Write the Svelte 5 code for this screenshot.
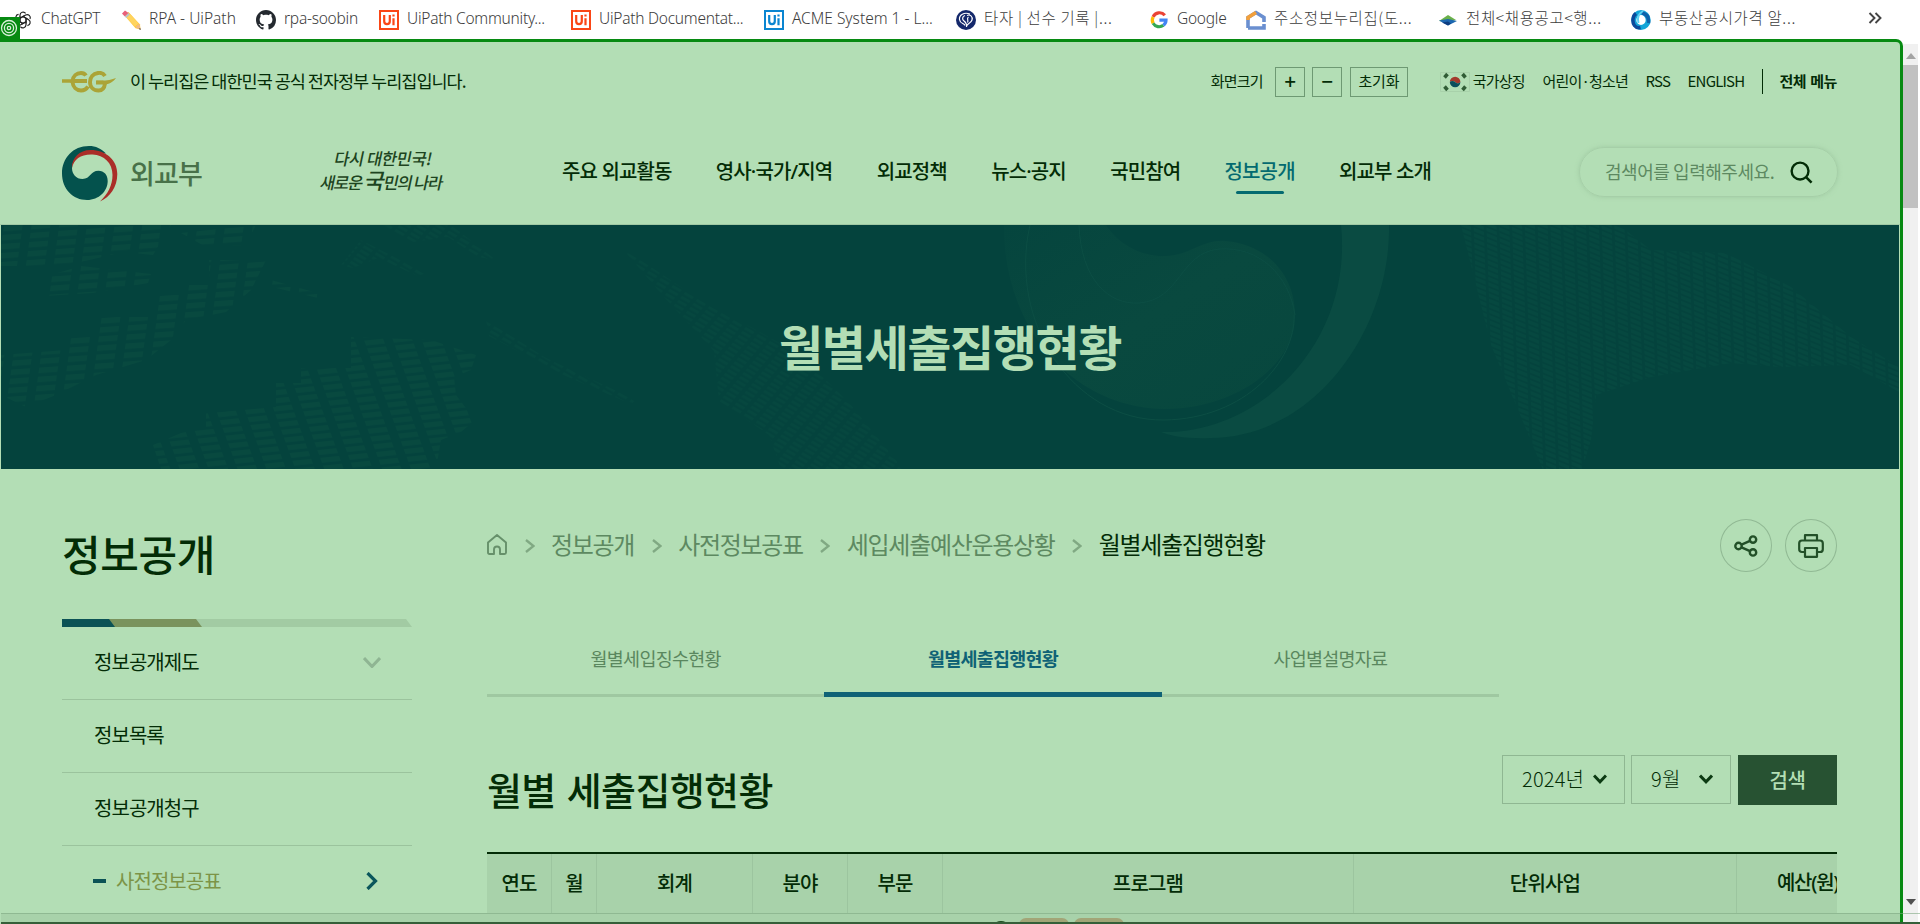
<script>
  const bookmarks = [
    { icon: 'gpt', label: 'ChatGPT', w: 108 },
    { icon: 'pencil', label: 'RPA - UiPath', w: 135, wide: true },
    { icon: 'github', label: 'rpa-soobin', w: 123 },
    { icon: 'ui', label: 'UiPath Community...', w: 192 },
    { icon: 'ui', label: 'UiPath Documentat...', w: 193 },
    { icon: 'uiblue', label: 'ACME System 1 - L...', w: 192, wide: true },
    { icon: 'ball', label: '타자 | 선수 기록 |...', w: 193, ko: true },
    { icon: 'google', label: 'Google', w: 97 },
    { icon: 'house', label: '주소정보누리집(도...', w: 192, ko: true },
    { icon: 'hill', label: '전체<채용공고<행...', w: 193, ko: true },
    { icon: 'swirl', label: '부동산공시가격 알...', w: 192, ko: true }
  ];
  const nav = ['주요 외교활동', '영사·국가/지역', '외교정책', '뉴스·공지', '국민참여', '정보공개', '외교부 소개'];
  const side = ['정보공개제도', '정보목록', '정보공개청구'];
  const crumbs = ['정보공개', '사전정보공표', '세입세출예산운용상황', '월별세출집행현황'];
  const tabs = ['월별세입징수현황', '월별세출집행현황', '사업별설명자료'];
  const columns = ['연도', '월', '회계', '분야', '부문', '프로그램', '단위사업', '예산(원)'];
</script>

<div class="screen">
  <div class="bookmarks">
    {#each bookmarks as b}
      <div class="bm" style="width:{b.w}px">
        <svg class="bicon" viewBox="0 0 20 20">
          {#if b.icon === 'gpt'}
            <g fill="none" stroke="#222" stroke-width="1.2">
              {#each [0, 60, 120, 180, 240, 300] as a}
                <path transform="rotate({a} 10 10)" d="M7 8.2V5.2a3.1 3.1 0 0 1 5.6-1.8M7 8.2l3-1.7 4.5 2.6" />
              {/each}
            </g>
          {:else if b.icon === 'pencil'}
            <path d="M3.5 5.5 7.5 2 19 14.5l.5 5-5-1.300z" fill="#ffc83d" />
            <path d="M5.500 7.500 9 4.200 17.500 13.500 14 16.500z" fill="#ffd45e" />
            <path d="M1 3.500 4 .5 7.500 3 3.800 6.500z" fill="#e8607a" />
            <path d="m3.800 6.500 3.700-3.500 1.300 1.400L5.200 8z" fill="#b9c3cb" />
            <path d="m14.300 17 3.900-3.300 1.500 6z" fill="#f0b98a" />
            <path d="m17.800 18.900 1.400-1 .6 2z" fill="#444" />
          {:else if b.icon === 'github'}
            <path transform="scale(1.25)" fill="#24292f" d="M8 0C3.580 0 0 3.580 0 8c0 3.540 2.290 6.530 5.470 7.590.4.070.55-.17.55-.38 0-.19-.01-.82-.01-1.490-2.010.37-2.530-.49-2.690-.94-.09-.23-.48-.94-.82-1.130-.28-.15-.68-.52-.01-.53.63-.01 1.080.58 1.230.82.72 1.210 1.870.87 2.330.66.070-.52.28-.87.51-1.070-1.780-.2-3.640-.89-3.640-3.950 0-.87.31-1.590.82-2.150-.08-.2-.36-1.020.08-2.120 0 0 .67-.21 2.200.82.64-.18 1.320-.27 2-.27s1.360.09 2 .27c1.530-1.040 2.200-.82 2.200-.82.44 1.100.16 1.920.08 2.120.51.56.82 1.270.82 2.150 0 3.070-1.870 3.750-3.650 3.950.29.25.54.73.54 1.480 0 1.070-.01 1.930-.01 2.200 0 .21.15.46.55.38A8.010 8.010 0 0 0 16 8c0-4.420-3.580-8-8-8z" />
          {:else if b.icon === 'ui' || b.icon === 'uiblue'}
            <g fill="none" stroke={b.icon === 'ui' ? '#fa4616' : '#0a85d1'}>
              <path stroke-width="2" d="M1 1h18v18H1z" />
              <path stroke-width="2.200" d="M5.200 5v6.300a2.800 2.800 0 0 0 5.600 0V5M14.500 8.200V15.200M14.500 4.400v2.200" />
            </g>
          {:else if b.icon === 'ball'}
            <circle cx="10" cy="10" r="10" fill="#14286b" />
            <path d="M14 4C8 1.800 3 5 3.500 9.500s4.500 3.500 5.500 6M9 5.500c-3 1-3 4-1 5.500s3 3 2.500 6M11 5.500c3-1.500 6 1 5 4.500s-5 3-5.500 6.500M12.500 7c-2.500 1.500.5 3.500-1 5.500" fill="none" stroke="#fff" stroke-width="1.200" />
          {:else if b.icon === 'google'}
            <g fill="none" stroke-width="3.200">
              <path stroke="#ea4335" d="M15.800 5.200A7 7 0 0 0 4.100 6.900" />
              <path stroke="#fbbc05" d="M4.100 6.900a7 7 0 0 0 0 6.400" />
              <path stroke="#34a853" d="M4.100 13.300a7 7 0 0 0 10.300 2" />
              <path stroke="#4285f4" d="M14.400 15.300A6.500 6.500 0 0 0 17 10.200h-6.600" />
            </g>
          {:else if b.icon === 'house'}
            <path d="M2 18V7.500L10 2.500 18 7.500V12M18 14v4H2" fill="none" stroke="#6a8fd0" stroke-width="3.600" />
            <path d="M2 10V7.500L10 2.500" fill="none" stroke="#f3a03a" stroke-width="3.600" />
          {:else if b.icon === 'hill'}
            <path d="M1 11 10 5l8 5-8 2z" fill="#6ab04a" />
            <path d="m1 10.500 9-1.500 9 2-9 4.500z" fill="#1c67b0" />
            <path d="m4 12.500 6-1 3 2-3 2z" fill="#0e3d80" />
          {:else}
            <ellipse cx="10" cy="10" rx="7.200" ry="7.500" fill="none" stroke="#12a5d8" stroke-width="5" />
            <path d="M5 3.500C1.500 6 1 12 3.500 15.500c1.500 2 4 2.500 6 2" fill="none" stroke="#0c4a9c" stroke-width="3.500" />
            <path d="M11 3c5 1 7 5 6.500 10" fill="none" stroke="#0d62ab" stroke-width="3.500" />
            <path d="M12 1C7 4 6 8 7.500 13" fill="none" stroke="#5ed0f2" stroke-width="2" />
          {/if}
        </svg>
        <span class:ko={b.ko} class:wide={b.wide}>{b.label}</span>
      </div>
    {/each}
    <svg class="more" viewBox="0 0 14 12"><path d="m1.500 1 5 5-5 5M7.500 1l5 5-5 5" fill="none" stroke="#444" stroke-width="1.900" /></svg>
  </div>
  <div class="badge">
    <svg viewBox="0 0 20 22"><g fill="none" stroke="#d8f0d8" stroke-width="1.300"><circle cx="9" cy="11" r="7.500" /><circle cx="9" cy="11" r="4.600" /><circle cx="9" cy="11" r="1.700" /></g></svg>
  </div>

  <div class="body">
    <div class="page">
      <header>
        <div class="top">
          <svg class="eg" viewBox="0 0 54 22">
            <path d="M0 10h24" stroke="#aba437" stroke-width="3.600" />
            <path d="M25 10H10.500c.5-5 4-8 8.500-8 2.500 0 4 1 5 2.500M10.500 11c.5 5 4 8.500 8.500 8.500 3 0 5.500-1.500 7-4M43 5c-1.500-2.500-4-3.500-7-3-5 .8-8 4.500-8 9 0 5 3.500 8.500 8.500 8.500 4 0 6-3 6.500-7M34 11.500h7.500" fill="none" stroke="#aba437" stroke-width="3.900" />
            <path d="M34 9.500C42 10.500 49 9 54 7c-3 4-7 6.500-12 6.500z" fill="#aba437" />
          </svg>
          <span class="official">이 누리집은 대한민국 공식 전자정부 누리집입니다.</span>
          <div class="util">
            <span class="size">화면크기</span>
            <span class="sq plus">+</span>
            <span class="sq minus">−</span>
            <span class="sq reset">초기화</span>
            <svg class="flag" viewBox="0 0 30 20">
              <path d="M.5.5h29v19H.5z" fill="none" stroke="#a8d1aa" />
              <path d="M9.800 10a5.300 5.300 0 0 1 10.600 0c-1.500 2-3.800 1.500-5.300 0s-4-1.500-5.300 0z" fill="#a33a2c" />
              <path d="M9.800 10a5.300 5.300 0 0 0 10.600 0c-1.500 2-3.800 1.500-5.300 0s-4-1.500-5.300 0z" fill="#0b4f5c" />
              <path d="m4.500 5.500 3-3.500M4.500 14.500l3 3.500M25.500 5.500 22.500 2M25.500 14.500l-3 3.500" stroke="#305c35" stroke-width="3.500" />
            </svg>
            <span class="u1">국가상징</span>
            <span class="u2">어린이·청소년</span>
            <span class="u3">RSS</span>
            <span class="u4">ENGLISH</span>
            <i class="bar"></i>
            <b>전체 메뉴</b>
          </div>
        </div>
        <div class="main">
          <svg class="emblem" viewBox="0 0 56 56">
            <path d="M44 7.500C39 2.500 34 0 27 0 11 0 0 12 0 27.500S11 54 25 54c12 0 20.700-9 20.700-19 0-6-3.700-10.200-9.200-10.200-8 0-8 8.200-16 8.200C14 33 10 28 10 22 10 14 18 7 27 6.500z" fill="#04524d" />
            <path d="M10 22C9.500 12 17.500 4 28.500 4 44 4 55.300 14 55.300 28 55.300 41 48 51 38 55.500 46 48 50.500 39 50.500 29 50.500 17 42 9 30.500 8.500 19 8 12 13 10 22z" fill="#aa2e28" />
          </svg>
          <span class="ministry">외교부</span>
          <div class="slogan"><span>다시 대한민국!</span><span class="second">새로운 <em>국</em>민의 나라</span></div>
          <nav>
            {#each nav as n}<span class:on={n === '정보공개'}>{n}</span>{/each}
          </nav>
          <div class="search">
            <span>검색어를 입력해주세요.</span>
            <svg viewBox="0 0 24 24"><circle cx="10.500" cy="10.500" r="8.800" fill="none" stroke="#032c06" stroke-width="2.500" /><path d="m17 17 5.500 5.500" stroke="#032c06" stroke-width="2.700" /></svg>
          </div>
        </div>
      </header>

      <section class="banner">
        <svg viewBox="0 0 1898 244">
          <defs>
            <pattern id="wide" width="28" height="9" patternUnits="userSpaceOnUse" patternTransform="rotate(-4) skewX(-12)"><path d="M3 1h19v5.500H3z" fill="#08493f" /></pattern>
            <pattern id="lean" width="28" height="8" patternUnits="userSpaceOnUse" patternTransform="rotate(-6) skewX(14)"><path d="M3 1h19v5H3z" fill="#08493f" /></pattern>
            <pattern id="fine" width="14" height="5" patternUnits="userSpaceOnUse" patternTransform="rotate(30) skewX(-10)"><path d="M2 1h10v2.500H2z" fill="#06473f" /></pattern>
            <pattern id="mesh" width="14" height="5" patternUnits="userSpaceOnUse" patternTransform="rotate(22) skewX(24)"><path d="M1 1h11v3H1z" fill="#064840" /></pattern>
            <linearGradient id="lobe" x1="0" y1="0" x2="1" y2="1"><stop offset="0" stop-color="#05453e" /><stop offset=".5" stop-color="#09493f" /><stop offset="1" stop-color="#07473e" /></linearGradient>
          </defs>
          <path fill="url(#wide)" d="M0 0h170l-18 30-30-3-25 6-35 8H0zM50 50l30-9 70 8-3 9-55 10-48 3zM180 8l75-8-10 20-40 2zM0 130 65 125V112H98V92H152V70H182V60H208V35H265L250 65 225 87 185 95 170 115 145 135 95 150 55 170 25 182 0 170zM270 55l50 14-3 4-50-12z" />
          <path fill="url(#lean)" d="M152 220 180 208 205 203V188L275 182V158H300V143H350V112L430 115 475 130 470 145 453 152 455 170 474 195 460 207 440 215 435 244H160z" />
          <path fill="url(#fine)" d="m380 0 70 0 45 35-18-3-30-20-35 5zM340 40l20-25 65 33-8 3-40-18-25 10zM485 95l60 38 90 42-5 4-70-30-72-38zM620 22l90 60 40 20 50 28 50 50 52 64H780l-12-34-50-34-5-50-50-54z" />
          <path fill="url(#mesh)" d="M1460 0h158l32 25 75 3 65 34 60 50 48 30v25l-48-27-70 2-50-4-80 14-55 18-5 45-15 49h-25l-60-144z" />
          <path fill="url(#lobe)" d="M1003 0h102c10 16 32 32 60 31 25-1 37-17 60-15 42 4 70 35 69 76-1 50-62 93-132 92-90-2-160-80-159-184z" />
          <path fill="#0a4b42" d="M1340 0h48c2 103-73 212-178 213-25 1-40-2-50-6 100 2 192-90 180-207z" />
          <path fill="none" stroke="#0c4e44" d="M1029 0c-22 96 42 196 134 195 82-1 132-60 130-105M1078 0c2 55 30 80 60 78 42-3 40-50 80-54 40-3 70 26 76 66" />
        </svg>
        <h1>월별세출집행현황</h1>
      </section>

      <div class="content">
        <aside>
          <h2>정보공개</h2>
          <svg class="strip" viewBox="0 0 350 8"><path d="M0 0h344l6 8H0z" fill="#a2cba3" /><path d="M0 0h134l6 8H0z" fill="#7a935d" /><path d="M0 0h47l6 8H0z" fill="#0b5255" /></svg>
          {#each side as s, i}
            <div class="item">
              <span>{s}</span>
              {#if i === 0}<svg width="18" height="11" viewBox="0 0 18 11"><path d="m1 1 8 8.500L17 1" fill="none" stroke="#8fb593" stroke-width="3" /></svg>{/if}
            </div>
          {/each}
          <div class="item active">
            <i></i><span>사전정보공표</span>
            <svg width="12" height="18" viewBox="0 0 12 18"><path d="m1.500 1 8 8-8 8" fill="none" stroke="#0b565c" stroke-width="3.200" /></svg>
          </div>
        </aside>

        <main>
          <div class="path">
            <svg class="home" viewBox="0 0 20 21"><path d="M1 8.500 10 1l9 7.500V18.500q0 1.500-1.500 1.500H13v-4.500a3 3 0 0 0-6 0V20H2.500Q1 20 1 18.500z" fill="none" stroke="#66906a" stroke-width="1.900" stroke-linejoin="round" /></svg>
            {#each crumbs as c, i}
              <svg class="sep" viewBox="0 0 10 14"><path d="m1 1 7.500 6L1 13" fill="none" stroke="#80a983" stroke-width="2.400" /></svg>
              <span class:current={i === 3}>{c}</span>
            {/each}
            <div class="tools">
              <div class="round"><svg width="24" height="22" viewBox="0 0 24 22"><g fill="none" stroke="#235028" stroke-width="2.400"><circle cx="4.500" cy="11" r="3.200" /><circle cx="19" cy="4.600" r="3.200" /><circle cx="19" cy="17.400" r="3.200" /><path d="m7.500 9.700 8.500-3.800M7.500 12.300l8.500 3.800" /></g></svg></div>
              <div class="round"><svg width="26" height="24" viewBox="0 0 26 24"><g fill="none" stroke="#235028" stroke-width="2.200" stroke-linejoin="round"><path d="M7 6.500V1.200h12v5.300M6.500 18H4q-2.800 0-2.800-2.800V9.300Q1.200 6.500 4 6.500h18q2.800 0 2.800 2.800v5.900q0 2.800-2.800 2.800h-2.500" /><path d="M7 14h12v8.800H7z" /></g></svg></div>
            </div>
          </div>

          <div class="tabs">
            {#each tabs as t, i}<div class:sel={i === 1}>{t}</div>{/each}
          </div>

          <div class="headline">
            <h3>월별 세출집행현황</h3>
            <div class="form">
              <div class="select year"><span>2024년</span><svg viewBox="0 0 14 10"><path d="m1 1.500 6 6.300 6-6.300" fill="none" stroke="#0c3a12" stroke-width="3" /></svg></div>
              <div class="select month"><span>9월</span><svg viewBox="0 0 14 10"><path d="m1 1.500 6 6.300 6-6.300" fill="none" stroke="#0c3a12" stroke-width="3" /></svg></div>
              <div class="submit">검색</div>
            </div>
          </div>

          <div class="table">
            {#each columns as c}<div>{c}</div>{/each}
          </div>
        </main>
      </div>
    </div>

    <div class="scroll">
      <svg width="10" height="6" viewBox="0 0 10 6"><path d="M0 6 5 0l5 6z" fill="#a3a3a3" /></svg>
      <div class="thumb"></div>
      <svg class="down" width="10" height="6" viewBox="0 0 10 6"><path d="m0 0 5 6 5-6z" fill="#505050" /></svg>
    </div>
    <div class="foot"><i class="dot"></i><i class="tan"></i><i class="tan two"></i></div>
  </div>
</div>

<style>
  :global(body) { margin: 0; background: #fff; overflow: hidden; }
  .screen { position: relative; width: 1920px; height: 924px; overflow: hidden; background: #fff; color: #032c06; font-family: 'Noto Sans CJK KR', sans-serif; letter-spacing: -0.8px; }
  .screen * { box-sizing: border-box; }
  h1, h2, h3 { margin: 0; font-weight: 500; }
  span, b { white-space: nowrap; }
  svg { flex: none; display: block; }

  .bookmarks { display: flex; align-items: center; height: 39px; padding-left: 14px; color: #3c3c3c; font: 300 15.500px 'Noto Sans', 'Noto Sans CJK KR', sans-serif; letter-spacing: -0.25px; }
  .bm { display: flex; align-items: center; gap: 8px; flex: none; height: 37px; }
  .bm span { margin-top: -3px; }
  .bicon { width: 20px; height: 20px; margin-left: -1px; }
  .bm .wide { letter-spacing: 0; }
  .bm .ko { font-family: 'Noto Sans CJK KR', sans-serif; letter-spacing: 0.65px; line-height: 22px; margin-top: -5px; }
  .more { width: 14px; height: 12px; margin: -3px 0 0 44px; }
  .badge { position: absolute; left: 0; top: 17px; width: 20px; height: 24px; background: #078a12; z-index: 3; }

  .body { position: relative; display: flex; height: 885px; }
  .page { width: 1903px; height: 885px; flex: none; overflow: hidden; background: #b3deb5; border: solid #078a12; border-width: 3px 3px 0 0; border-radius: 0 7px 0 0; }
  header { height: 183px; border-bottom: 1px solid #a1c9a4; }

  .top { display: flex; align-items: center; height: 79px; padding: 0 63px 0 62px; }
  .eg { width: 54px; height: 22px; margin-right: 14px; }
  .official { font-size: 17.500px; letter-spacing: -1px; margin-top: -2px; }
  .util { display: flex; align-items: center; margin-left: auto; font-size: 15px; }
  .util .size, .util .u1, .util .u2, .util .u3, .util .u4, .util b { margin-top: -2px; }
  .sq { display: flex; align-items: center; justify-content: center; height: 30px; border: 1px solid #6e9973; }
  .plus, .minus { width: 30px; padding-bottom: 2px; font-size: 20px; font-weight: 500; }
  .size { margin-right: 12px; }
  .plus { margin-right: 7px; }
  .minus { margin-right: 8px; }
  .reset { width: 58px; margin-right: 32px; padding-bottom: 2px; letter-spacing: -0.2px; }
  .flag { width: 30px; height: 20px; margin-right: 3px; }
  .u1, .u2, .u3 { margin-right: 17.500px; }
  .util b { letter-spacing: -0.4px; word-spacing: 1px; }
  .bar { width: 1px; height: 25px; margin: 0 16px 0 18px; background: #032c06; }

  .main { display: flex; align-items: center; height: 103px; padding: 0 63px 0 62px; }
  .emblem { width: 56px; height: 56px; margin: 3px 12px 0 0; }
  .ministry { width: 193px; font-size: 27px; font-weight: 500; color: #487149; letter-spacing: -0.8px; }
  .slogan { display: flex; flex-direction: column; width: 119px; margin-top: -4px; font-size: 16.500px; font-weight: 500; line-height: 21px; color: #1d4420; transform: skewX(-12deg); }
  .slogan span { padding-left: 9px; letter-spacing: -0.4px; }
  .slogan .second { padding-left: 0; letter-spacing: -1.200px; }
  .slogan em { font-size: 22px; font-style: normal; }
  nav { display: flex; gap: 44.300px; margin-left: 120px; font-family: 'Noto Sans', 'Noto Sans CJK KR', sans-serif; font-size: 20px; font-weight: 500; letter-spacing: -0.87px; }
  nav span { position: relative; line-height: 44px; margin-top: -2px; }
  nav .on { color: #046a70; }
  nav .on::after { content: ''; position: absolute; left: 11px; right: 11px; bottom: 0; height: 3px; border-radius: 2px; background: #046a70; }
  .search { display: flex; align-items: center; width: 259px; height: 50px; margin: -1px -1px 0 auto; padding: 0 24px 0 25px; border: 1px solid #a6cfa8; border-radius: 25px; box-shadow: 0 0 4px #8fb99288; font-size: 18px; color: #5d8961; letter-spacing: -0.45px; }
  .search span { margin-top: -2px; }
  .search svg { width: 23px; height: 23px; margin: 0 0 0 auto; }

  .banner { display: grid; width: 1898px; height: 244px; margin-left: 1px; background: #04433d; place-items: center; }
  .banner > * { grid-area: 1 / 1; }
  .banner svg { width: 1898px; height: 244px; }
  h1 { font-size: 48px; font-weight: 700; letter-spacing: -0.03em; color: #b3deb5; line-height: 60px; margin-top: -4px; z-index: 1; }

  .content { display: flex; gap: 75px; padding-left: 62px; }
  aside { width: 350px; }
  h2 { height: 150px; padding-top: 52px; font-size: 42px; line-height: 64px; letter-spacing: -0.4px; }
  .strip { width: 350px; height: 8px; }
  .item { display: flex; align-items: center; justify-content: space-between; height: 73px; padding: 0 31px 2px 32px; border-bottom: 1px solid #9bc39d; font-size: 20px; letter-spacing: -0.95px; }
  .item span { margin-top: -1px; }
  .item:last-child { border: 0; }
  .active { justify-content: flex-start; color: #7c9447; padding: 0 34px 3px 31px; }
  .active i { width: 13px; height: 4px; margin-right: 10px; background: #0b5255; }
  .active svg { margin-left: auto; }

  main { width: 1350px; }
  .path { display: flex; align-items: center; height: 53px; margin-top: 50px; font-size: 24px; color: #5d8961; letter-spacing: -1.300px; }
  .path span { margin-top: -4px; }
  .home { width: 20px; height: 21px; margin-top: -2px; }
  .sep { width: 10px; height: 14px; margin: 0 16.500px 0 17.500px; }
  .current { color: #032c06; }
  .tools { display: flex; gap: 13px; margin-left: auto; }
  .round { display: grid; place-items: center; width: 52px; height: 53px; border: 1px solid #91b994; border-radius: 50%; }

  .tabs { display: flex; width: 1012px; height: 53px; margin-top: 72px; }
  .tabs div { flex: 1; height: 53px; border-bottom: 3px solid #9fc8a1; text-align: center; font-size: 18.500px; line-height: 28px; color: #5a875e; letter-spacing: -0.75px; }
  .tabs .sel { border-bottom: 5px solid #0f6276; font-weight: 700; color: #0f6276; }

  .headline { display: flex; justify-content: space-between; height: 155px; padding-top: 58px; }
  h3 { font-size: 38px; line-height: 67px; letter-spacing: -0.6px; word-spacing: 3px; }
  .form { display: flex; }
  .select { display: flex; align-items: center; justify-content: space-between; height: 49px; padding: 0 17px 2px 19px; border: 1px solid #8fb792; font-size: 20px; font-weight: 300; letter-spacing: 0.2px; }
  .select svg { width: 14px; height: 10px; }
  .year { width: 123px; margin-right: 6px; }
  .month { width: 100px; margin-right: 7px; }
  .submit { width: 99px; height: 50px; background: #275232; color: #b3deb5; font-size: 20px; font-weight: 500; line-height: 49px; text-align: center; letter-spacing: -0.3px; }

  .table { display: grid; grid-template-columns: 65px 45px 156px 95px 95px 411px 383px 100px; width: 1350px; overflow: hidden; height: 62px; border-top: 2px solid #032c06; background: #a8d2aa; }
  .table div { border-right: 1px solid #9cc59f; font-size: 20px; font-weight: 500; line-height: 58px; text-align: center; white-space: nowrap; }
  .table div:last-child { border: 0; padding-left: 40px; text-align: left; font-family: 'Noto Sans', 'Noto Sans CJK KR', sans-serif; letter-spacing: -1.300px; }

  .scroll { display: flex; flex-direction: column; align-items: center; width: 15px; height: 879px; margin-top: 5px; padding-top: 9px; background: #f0f0f0; }
  .thumb { width: 15px; height: 143px; margin-top: 6px; background: #c1c1c1; }
  .down { margin-top: auto; margin-bottom: 18px; }
  .foot { position: absolute; left: 1px; right: 0; bottom: 0; height: 11px; overflow: hidden; border-top: 1px solid #7fa98299; border-bottom: 2px solid #355f39; background: linear-gradient(90deg, #a8d2aa 1899px, transparent 0); }
  .foot i { position: absolute; top: 4px; }
  .dot { left: 992px; width: 16px; height: 12px; border-radius: 50%; background: #1b4a1d; transform: translateY(3px); }
  .tan { left: 1018px; width: 50px; height: 12px; border-radius: 7px 7px 0 0; background: #a2a577; }
  .two { left: 1073px; }
</style>
